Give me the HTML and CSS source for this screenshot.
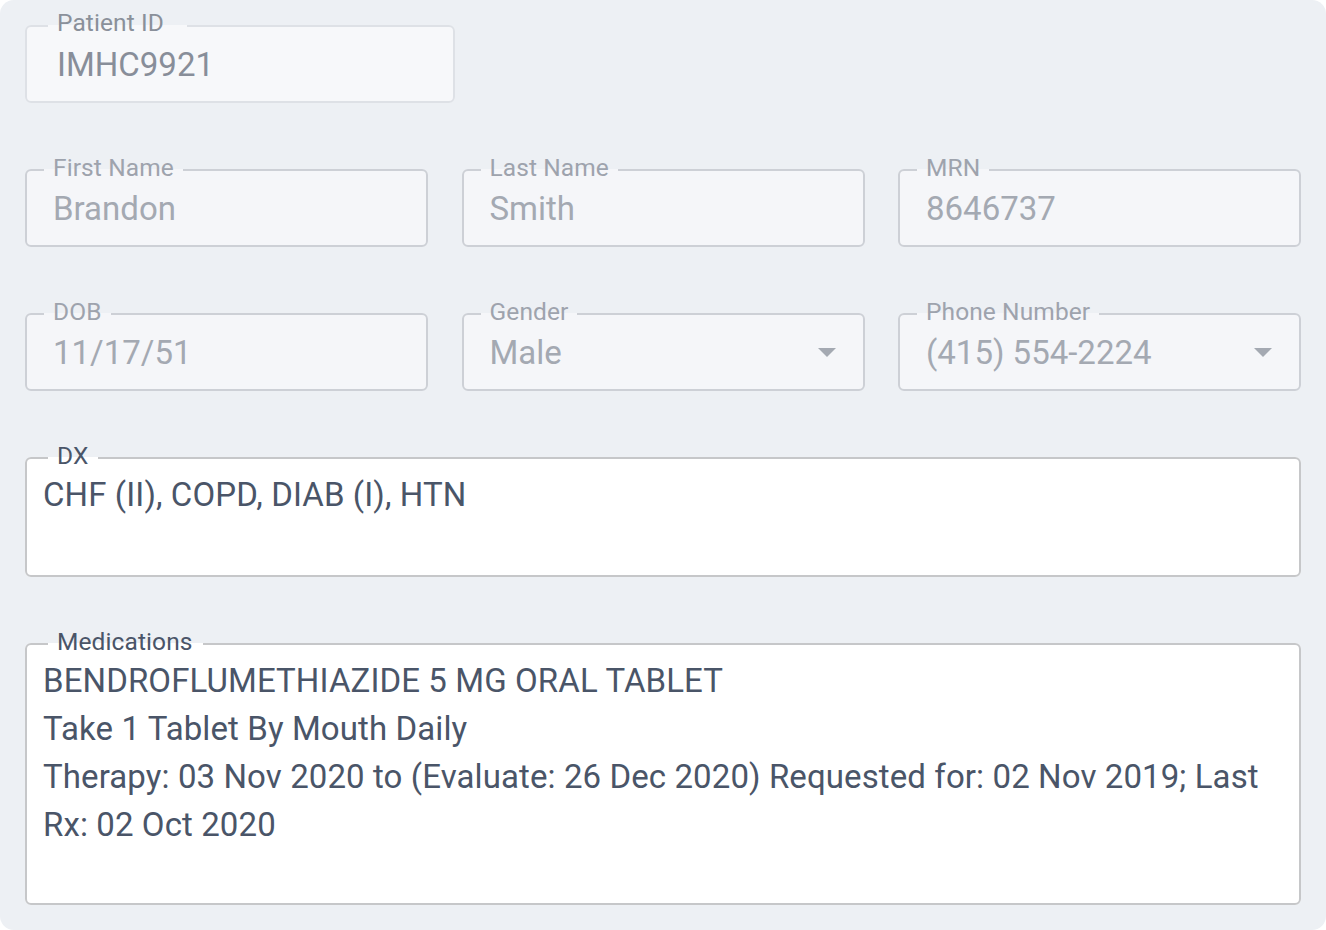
FILE: index.html
```html
<!DOCTYPE html>
<html lang="en">
<head>
<meta charset="utf-8">
<title>Patient</title>
<link rel="stylesheet" href="styles.css">
</head>
<body>
<div class="page">
  <div class="row">
    <fieldset class="field field-id">
      <legend class="label">Patient ID</legend>
      <div class="value">IMHC9921</div>
    </fieldset>
  </div>
  <div class="row grid3">
    <fieldset class="field field-dis">
      <legend class="label">First Name</legend>
      <div class="value">Brandon</div>
    </fieldset>
    <fieldset class="field field-dis">
      <legend class="label">Last Name</legend>
      <div class="value">Smith</div>
    </fieldset>
    <fieldset class="field field-dis">
      <legend class="label">MRN</legend>
      <div class="value">8646737</div>
    </fieldset>
  </div>
  <div class="row grid3">
    <fieldset class="field field-dis">
      <legend class="label">DOB</legend>
      <div class="value">11/17/51</div>
    </fieldset>
    <fieldset class="field field-dis">
      <legend class="label">Gender</legend>
      <div class="value select"><span>Male</span>
        <svg class="arrow" width="18" height="9" viewBox="0 0 18 9"><path d="M0 0h18L9 9z"/></svg>
      </div>
    </fieldset>
    <fieldset class="field field-dis">
      <legend class="label">Phone Number</legend>
      <div class="value select"><span>(415) 554-2224</span>
        <svg class="arrow" width="18" height="9" viewBox="0 0 18 9"><path d="M0 0h18L9 9z"/></svg>
      </div>
    </fieldset>
  </div>
  <div class="row">
    <fieldset class="field field-text field-dx">
      <legend class="label">DX</legend>
      <div class="text">CHF (II), COPD, DIAB (I), HTN</div>
    </fieldset>
  </div>
  <div class="row">
    <fieldset class="field field-text field-med">
      <legend class="label">Medications</legend>
      <div class="text">BENDROFLUMETHIAZIDE 5 MG ORAL TABLET<br>Take 1 Tablet By Mouth Daily<br>Therapy: 03 Nov 2020 to (Evaluate: 26 Dec 2020) Requested for: 02 Nov 2019; Last Rx: 02 Oct 2020</div>
    </fieldset>
  </div>
</div>
</body>
</html>
```

FILE: styles.css
```css
* { box-sizing: border-box; }
html, body { margin: 0; padding: 0; background: #ffffff; }
body { font-family: Roboto, "Noto Sans", Arial, sans-serif; }

.page {
  width: 1326px;
  height: 930px;
  background: #edf0f4;
  border-radius: 14px;
  padding: 13px 25px 0 25px;
  display: flex;
  flex-direction: column;
  gap: 54px;
}

.row { display: flex; }
.grid3 {
  display: grid;
  grid-template-columns: repeat(3, 1fr);
  column-gap: 33.5px;
}

.field {
  margin: 0;
  padding: 0;
  border: 2px solid #cdd0d6;
  border-radius: 6px;
  min-width: 0;
}

.label {
  font-size: 24.5px;
  line-height: 22px;
  padding: 0 9px 4px 9px;
  margin-left: 17px;
  color: #9ea3ad;
  letter-spacing: 0.1px;
}

.value {
  font-size: 33px;
  line-height: 40px;
  height: 62px;
  padding: 6px 0 0 26px;
  color: #a4a9b2;
}

.field-id {
  width: 430px;
  background: #f7f8fa;
  border-color: #dee1e6;
}
.field-id .label {
  margin-left: 21px;
  line-height: 20px;
  padding: 0 23px 6px 9px;
  color: #8a909a;
}
.field-id .value {
  padding-left: 30px;
  color: #888e99;
}

.field-dis { background: #f5f6f9; }

.select {
  display: flex;
  align-items: flex-start;
  justify-content: space-between;
  padding-right: 27px;
}
.arrow {
  flex: none;
  fill: #a4a9b2;
  margin-top: 15px;
}

.field-text {
  width: 100%;
  background: #ffffff;
  border-color: #c6c7c9;
}
.field-text .label {
  margin-left: 21px;
  padding: 0 10px 4px 9px;
  color: #4a5568;
}
.text {
  font-size: 33px;
  line-height: 48px;
  padding: 0 16px;
  color: #4a5568;
  letter-spacing: 0.1px;
}
.field-dx .text { height: 104px; }
.field-med .text { height: 246px; }
```
